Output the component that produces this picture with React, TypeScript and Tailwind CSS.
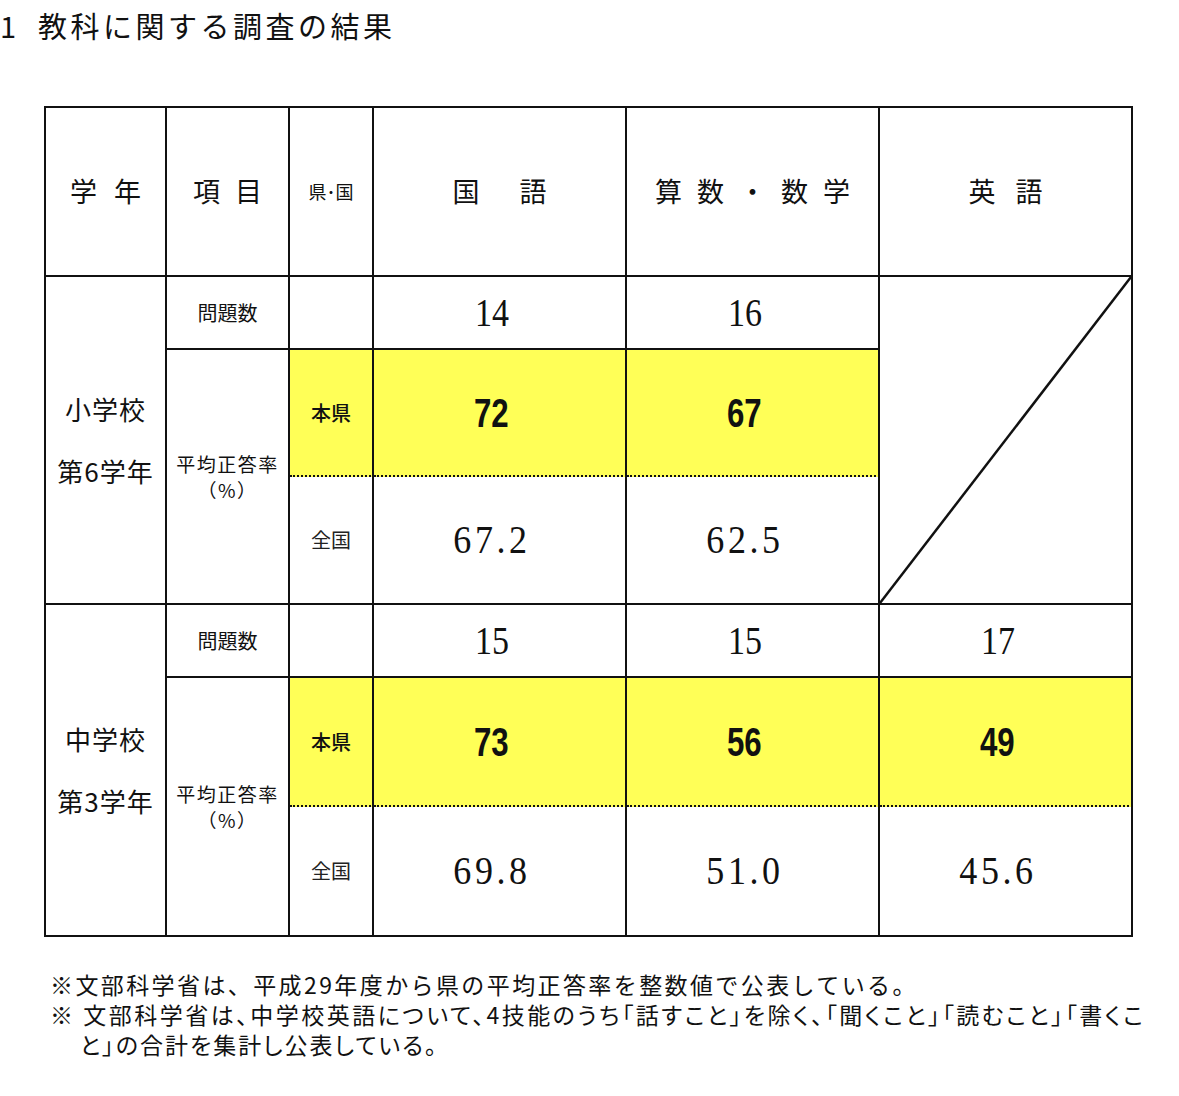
import type { ReactNode } from 'react';

const SANS = "font-['Noto_Sans_CJK_JP',sans-serif]";
const SERIF = "font-['Liberation_Serif','Noto_Sans_CJK_JP',serif]";
const BOLDNUM = "font-['Liberation_Sans',sans-serif]";

const cell = 'border-r-2 border-b-2 border-[#111] p-0 text-center align-middle';
const numCell = 'border-r-2 border-b-2 border-[#111] p-0 pr-[16px] text-center align-middle';
const dotted =
  'border-r-2 border-b-2 border-[#111] [border-bottom-style:dotted] p-0 pr-[16px] text-center align-middle bg-[#ffff57]';
const dottedLabel =
  'border-r-2 border-b-2 border-[#111] [border-bottom-style:dotted] p-0 text-center align-middle bg-[#ffff57]';

// Header label with spaced characters
function Spaced({ chars, gap }: { chars: string[]; gap: string }) {
  return (
    <div className={`flex items-center justify-center ${gap} text-[27px] ${SANS}`}>
      {chars.map((c, i) => (
        <span key={i}>{c}</span>
      ))}
    </div>
  );
}

function Count({ children }: { children: ReactNode }) {
  return (
    <span className={`${SERIF} inline-block scale-x-[0.85] text-[40px] leading-none`}>{children}</span>
  );
}

function Pref({ children }: { children: ReactNode }) {
  return (
    <span className={`${BOLDNUM} inline-block scale-x-[0.78] text-[40px] font-bold leading-none`}>
      {children}
    </span>
  );
}

function National({ children }: { children: ReactNode }) {
  return (
    <span className={`${SERIF} inline-block scale-x-[0.9] text-[40px] leading-none tracking-[4px]`}>
      {children}
    </span>
  );
}

function RateLabel() {
  return (
    <div className={`${SANS} text-[19px] leading-[26px] tracking-[1.5px]`}>
      <div>平均正答率</div>
      <div>（%）</div>
    </div>
  );
}

export default function App() {
  return (
    <div className="w-[1179px] h-[1096px] bg-white text-[#111] overflow-hidden">
      {/* Title */}
      <div className={`h-[52px] flex items-center ${SANS} text-[29px] tracking-[3.5px]`}>
        <span className="w-[38px]">1</span>
        <span>教科に関する調査の結果</span>
      </div>

      {/* Results table */}
      <table className="ml-[44px] mt-[54px] w-[1089px] table-fixed border-separate border-spacing-0 border-t-2 border-l-2 border-[#111]">
        <colgroup>
          <col className="w-[121px]" />
          <col className="w-[123px]" />
          <col className="w-[84px]" />
          <col className="w-[253px]" />
          <col className="w-[253px]" />
          <col className="w-[253px]" />
        </colgroup>
        <tbody>
          <tr className="h-[169px]">
            <td className={cell}>
              <Spaced chars={['学', '年']} gap="gap-[17px]" />
            </td>
            <td className={cell}>
              <Spaced chars={['項', '目']} gap="gap-[15px]" />
            </td>
            <td className={cell}>
              <div className={`${SANS} text-[18px]`}>県･国</div>
            </td>
            <td className={cell}>
              <Spaced chars={['国', '語']} gap="gap-[40px]" />
            </td>
            <td className={cell}>
              <Spaced chars={['算', '数', '・', '数', '学']} gap="gap-[15px]" />
            </td>
            <td className={cell}>
              <Spaced chars={['英', '語']} gap="gap-[20px]" />
            </td>
          </tr>

          {/* 小学校 */}
          <tr className="h-[73px]">
            <td rowSpan={3} className={cell}>
              <div className={`${SANS} text-[26px] leading-[62px] tracking-[1px]`}>
                <div>小学校</div>
                <div>第6学年</div>
              </div>
            </td>
            <td className={cell}>
              <span className={`${SANS} text-[20px]`}>問題数</span>
            </td>
            <td className={cell}></td>
            <td className={numCell}>
              <Count>14</Count>
            </td>
            <td className={numCell}>
              <Count>16</Count>
            </td>
            <td rowSpan={3} className={`${cell} relative`}>
              <svg className="absolute inset-0 w-full h-full" viewBox="0 0 100 100" preserveAspectRatio="none">
                <line x1="0" y1="100" x2="100" y2="0" stroke="#111" strokeWidth="2.5" vectorEffect="non-scaling-stroke" />
              </svg>
            </td>
          </tr>
          <tr className="h-[127px]">
            <td rowSpan={2} className={cell}>
              <RateLabel />
            </td>
            <td className={dottedLabel}>
              <span className={`${SANS} text-[20px] font-medium`}>本県</span>
            </td>
            <td className={dotted}>
              <Pref>72</Pref>
            </td>
            <td className={dotted}>
              <Pref>67</Pref>
            </td>
          </tr>
          <tr className="h-[128px]">
            <td className={cell}>
              <span className={`${SANS} text-[20px] text-[#222]`}>全国</span>
            </td>
            <td className={numCell}>
              <National>67.2</National>
            </td>
            <td className={numCell}>
              <National>62.5</National>
            </td>
          </tr>

          {/* 中学校 */}
          <tr className="h-[73px]">
            <td rowSpan={3} className={cell}>
              <div className={`${SANS} text-[26px] leading-[62px] tracking-[1px]`}>
                <div>中学校</div>
                <div>第3学年</div>
              </div>
            </td>
            <td className={cell}>
              <span className={`${SANS} text-[20px]`}>問題数</span>
            </td>
            <td className={cell}></td>
            <td className={numCell}>
              <Count>15</Count>
            </td>
            <td className={numCell}>
              <Count>15</Count>
            </td>
            <td className={numCell}>
              <Count>17</Count>
            </td>
          </tr>
          <tr className="h-[129px]">
            <td rowSpan={2} className={cell}>
              <RateLabel />
            </td>
            <td className={dottedLabel}>
              <span className={`${SANS} text-[20px] font-medium`}>本県</span>
            </td>
            <td className={dotted}>
              <Pref>73</Pref>
            </td>
            <td className={dotted}>
              <Pref>56</Pref>
            </td>
            <td className={dotted}>
              <Pref>49</Pref>
            </td>
          </tr>
          <tr className="h-[130px]">
            <td className={cell}>
              <span className={`${SANS} text-[20px] text-[#222]`}>全国</span>
            </td>
            <td className={numCell}>
              <National>69.8</National>
            </td>
            <td className={numCell}>
              <National>51.0</National>
            </td>
            <td className={numCell}>
              <National>45.6</National>
            </td>
          </tr>
        </tbody>
      </table>

      {/* Notes */}
      <div className={`ml-[50px] mt-[32px] ${SANS} text-[23px] leading-[30px]`}>
        <p className="tracking-[2.4px] whitespace-nowrap">
          ※文部科学省は、平成29年度から県の平均正答率を整数値で公表している。
        </p>
        <p className="whitespace-nowrap tracking-[2.5px] [font-feature-settings:'palt']">
          ※ 文部科学省は、中学校英語について、4技能のうち「話すこと」を除く、「聞くこと」「読むこと」「書くこ
        </p>
        <p className="pl-[30px] whitespace-nowrap tracking-[2px] [font-feature-settings:'palt']">
          と」の合計を集計し公表している。
        </p>
      </div>
    </div>
  );
}
